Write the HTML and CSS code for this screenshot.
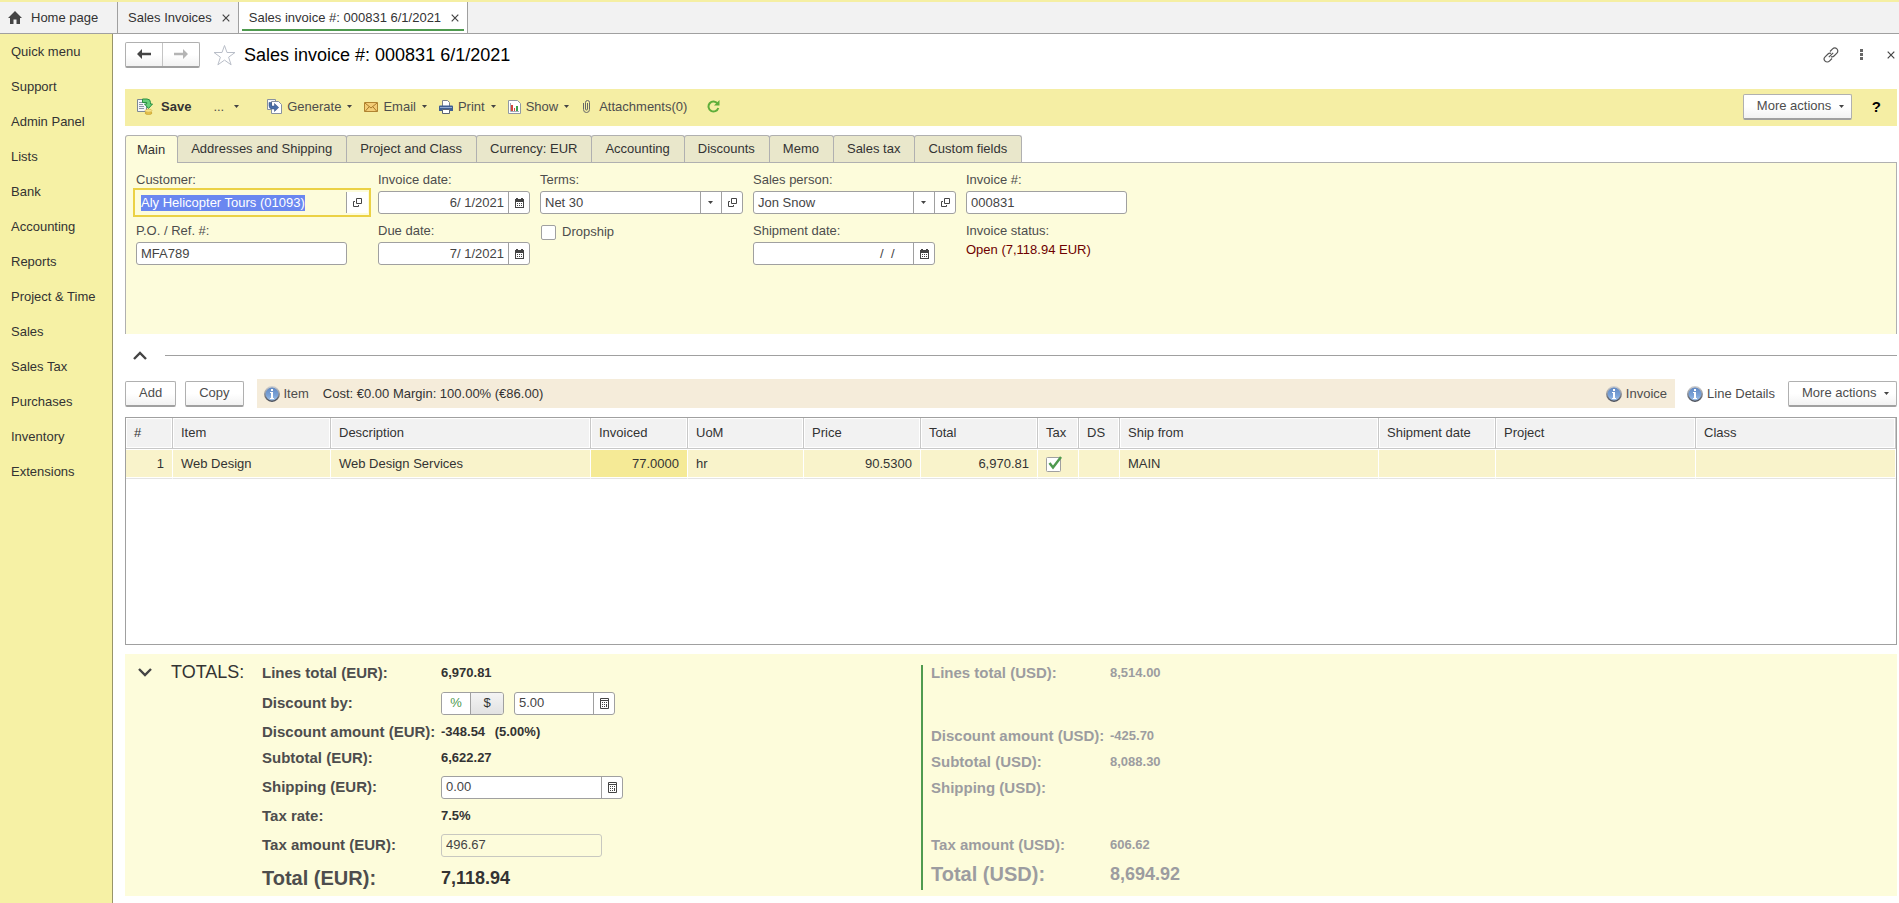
FILE: index.html
```
<!DOCTYPE html>
<html lang="en">

<head>
    <meta charset="UTF-8">
    <meta name="viewport" content="width=device-width, initial-scale=1.0">
    <title>Sales invoice #: 000831 6/1/2021</title>
    <link rel="stylesheet" href="styles.css">
</head>

<body>

    <!-- shared icons -->
    <svg class="sprite" aria-hidden="true">
        <defs>
            <linearGradient id="infoFill" x1="0" y1="0" x2="0" y2="1">
                <stop offset="0" stop-color="#5f86c0" />
                <stop offset="0.6" stop-color="#7ba3d8" />
                <stop offset="1" stop-color="#a5c6ec" />
            </linearGradient>
            <linearGradient id="infoRing" x1="0" y1="0" x2="0" y2="1">
                <stop offset="0" stop-color="#cfcfcf" />
                <stop offset="1" stop-color="#4a4f5a" />
            </linearGradient>
        </defs>
        <symbol id="icon-calendar" viewBox="0 0 9 10">
            <path d="M0 1h9v9H0z" fill="#444" />
            <path d="M1 0h2v2H1zM6 0h2v2H6z" fill="#444" />
            <path d="M1 4h7v5H1z" fill="#fff" />
            <path d="M2 5h1v1H2zM4 5h1v1H4zM6 5h1v1H6zM2 7h1v1H2zM4 7h1v1H4zM6 7h1v1H6z" fill="#444" />
        </symbol>
        <symbol id="icon-open" viewBox="0 0 9 9">
            <path d="M3.500 0.500h5v5h-5zM2 3.500H0.500v5h5V7" fill="none" stroke="#444" />
        </symbol>
        <symbol id="icon-calc" viewBox="0 0 9 11">
            <path d="M0.500 0.500h8v10h-8z" fill="#fff" stroke="#444" />
            <path d="M1 2h7v1H1z" fill="#444" />
            <path d="M2 4h1v1H2zM4 4h1v1H4zM6 4h1v1H6zM2 6h1v1H2zM4 6h1v1H4zM6 6h1v3H6zM2 8h1v1H2zM4 8h1v1H4z" fill="#444" />
        </symbol>
        <symbol id="icon-info" viewBox="0 0 16 16">
            <circle cx="8" cy="8" r="7.200" fill="url(#infoFill)" stroke="url(#infoRing)" stroke-width="1.500" />
            <path d="M7 3h2v2H7zM6 6h3v6h1v1H6v-1h1V7H6z" fill="#fff" />
        </symbol>
        <symbol id="icon-caret" viewBox="0 0 5 3">
            <path d="M0 0h5L2.500 3z" fill="#444" />
        </symbol>
        <symbol id="icon-close" viewBox="0 0 8 8">
            <path d="M0.700 0.700l6.600 6.600M7.300 0.700L0.700 7.300" stroke="#444" stroke-width="1.200" />
        </symbol>
    </svg>

    <header class="window-tabs">
        <a href="#" class="window-tab home">
            <svg width="14" height="13" viewBox="0 0 14 13"><path d="M7 0L0 7h2v6h3.500V8.500h3V13H12V7h2z" fill="#444" /></svg>
            Home page
        </a>
        <div class="window-tab">
            <a href="#">Sales Invoices</a>
            <button type="button" class="close" aria-label="Close tab"><svg width="8" height="8"><use href="#icon-close" /></svg></button>
        </div>
        <div class="window-tab current">
            <a href="#">Sales invoice #: 000831 6/1/2021</a>
            <button type="button" class="close" aria-label="Close tab"><svg width="8" height="8"><use href="#icon-close" /></svg></button>
        </div>
    </header>

    <div class="page">

        <nav class="sidebar">
            <a href="#">Quick menu</a>
            <a href="#">Support</a>
            <a href="#">Admin Panel</a>
            <a href="#">Lists</a>
            <a href="#">Bank</a>
            <a href="#">Accounting</a>
            <a href="#">Reports</a>
            <a href="#">Project &amp; Time</a>
            <a href="#">Sales</a>
            <a href="#">Sales Tax</a>
            <a href="#">Purchases</a>
            <a href="#">Inventory</a>
            <a href="#">Extensions</a>
        </nav>

        <main class="content">

            <div class="title-bar">
                <div class="history">
                    <button type="button" aria-label="Back">
                        <svg width="14" height="10" viewBox="0 0 14 10"><path d="M0 5l5-5v3.800h9v2.400H5V10z" fill="#444" /></svg>
                    </button>
                    <button type="button" aria-label="Forward">
                        <svg width="14" height="10" viewBox="0 0 14 10"><path d="M14 5L9 0v3.800H0v2.400h9V10z" fill="#b4b4b4" /></svg>
                    </button>
                </div>
                <button type="button" class="plain star" aria-label="Add to favorites">
                    <svg width="23" height="22" viewBox="0 0 23 22"><path d="M11.500 1.500l2.500 7h8l-6.400 4.700 2.500 7.600-6.600-4.700-6.600 4.700 2.500-7.600L1 8.500h8z" fill="#fff" stroke="#b9bec8" /></svg>
                </button>
                <h1>Sales invoice #: 000831 6/1/2021</h1>
                <div class="window-tools">
                    <button type="button" class="plain" aria-label="Get link">
                        <svg width="16" height="16" viewBox="0 0 16 16"><path d="M7 4.500l2.600-2.600a2.900 2.900 0 0 1 4.300 4.300L11 9a2.800 2.800 0 0 1-3 .6M9 11.500l-2.600 2.600a2.900 2.900 0 0 1-4.300-4.300L5 7a2.800 2.800 0 0 1 3-.6M5.800 10.200l4.400-4.400" fill="none" stroke="#555" stroke-width="1.200" /></svg>
                    </button>
                    <button type="button" class="plain" aria-label="Menu">
                        <svg width="3" height="11" viewBox="0 0 3 11"><path d="M0 0h3v3H0zM0 4h3v3H0zM0 8h3v3H0z" fill="#666" /></svg>
                    </button>
                    <button type="button" class="plain" aria-label="Close"><svg width="8" height="8"><use href="#icon-close" /></svg></button>
                </div>
            </div>

            <div class="toolbar">
                <button type="button" class="tool save">
                    <svg width="16" height="17" viewBox="0 0 16 17">
                        <path d="M0.500 1.500h9v12h-9z" fill="#f4f6fa" stroke="#7d8795" />
                        <path d="M2 4.500h5M2 6.500h4M2 8.500h5M2 10.500h5" stroke="#8d96a5" />
                        <path d="M5.500 1h4.500a3.500 3.500 0 0 1 3.500 3.500V6h2L11.500 10.500 7.500 6h2.200V4.500H5.500z" fill="#67d07a" stroke="#2a8f43" />
                        <ellipse cx="11.500" cy="15" rx="3.500" ry="1.500" fill="#e5c24a" stroke="#b98f22" stroke-width="0.500" />
                        <ellipse cx="11.500" cy="12.700" rx="3.500" ry="1.500" fill="#f7e38a" stroke="#c9a033" stroke-width="0.500" />
                    </svg>
                    Save
                </button>
                <button type="button" class="tool more">... <svg class="caret" width="5" height="3"><use href="#icon-caret" /></svg></button>
                <button type="button" class="tool">
                    <svg width="15" height="15" viewBox="0 0 15 15">
                        <path d="M0.500 0.500h8v10h-8z" fill="#f4f6fa" stroke="#8791a0" />
                        <path d="M4.500 2.500h7l3 3v9h-10z" fill="#fff" stroke="#8791a0" />
                        <path d="M2 3.500h2.500v3.500h3V4.500l4.200 4L7.500 12.500V10H5.500A3.500 3.500 0 0 1 2 6.700z" fill="#4a6fa8" stroke="#2f4d7d" stroke-width="0.500" />
                    </svg>
                    Generate <svg class="caret" width="5" height="3"><use href="#icon-caret" /></svg>
                </button>
                <button type="button" class="tool">
                    <svg width="14" height="10" viewBox="0 0 14 10">
                        <path d="M0.500 0.500h13v9H0.500z" fill="#f3cd76" stroke="#b08331" />
                        <path d="M1 1l6 5 6-5M1 9.500L5.200 4.700M13 9.500L8.800 4.700" fill="none" stroke="#a87a2a" />
                    </svg>
                    Email <svg class="caret" width="5" height="3"><use href="#icon-caret" /></svg>
                </button>
                <button type="button" class="tool">
                    <svg width="14" height="14" viewBox="0 0 14 14">
                        <path d="M3.500 6V0.500h5l2 2V6" fill="#fff" stroke="#7a7f8a" />
                        <path d="M1 5.500h12a1 1 0 0 1 1 1V11H0V6.500a1 1 0 0 1 1-1z" fill="#3f5f93" />
                        <path d="M1 7h12v1H1z" fill="#91aad2" />
                        <path d="M3.500 9.500h7v4h-7z" fill="#fff" stroke="#5a6273" />
                    </svg>
                    Print <svg class="caret" width="5" height="3"><use href="#icon-caret" /></svg>
                </button>
                <button type="button" class="tool">
                    <svg width="13" height="14" viewBox="0 0 13 14">
                        <path d="M0.500 0.500h9l3 3v10h-12z" fill="#fff" stroke="#8f98a5" />
                        <path d="M3 5h2v6H3z" fill="#d4473c" />
                        <path d="M6 8h1v3H6z" fill="#d4473c" />
                        <path d="M8 6h2v5H8z" fill="#3aa04a" />
                        <path d="M2.500 3v8.500H11" fill="none" stroke="#a5abb5" />
                    </svg>
                    Show <svg class="caret" width="5" height="3"><use href="#icon-caret" /></svg>
                </button>
                <button type="button" class="tool attach">
                    <svg width="7" height="13" viewBox="0 0 7 13"><path d="M4.500 3v6a1 1 0 0 1-2 0V2.500a2 2 0 0 1 4 0v7a3 3 0 0 1-6 0V3" fill="none" stroke="#666" /></svg>
                    Attachments(0)
                </button>
                <button type="button" class="tool" aria-label="Refresh">
                    <svg width="13" height="13" viewBox="0 0 13 13"><path d="M10.500 3.500A5 5 0 1 0 11.300 8" fill="none" stroke="#5fae3a" stroke-width="2" /><path d="M12.500 0v5.500H7z" fill="#5fae3a" /></svg>
                </button>
                <button type="button" class="btn menu-btn toolbar-more">More actions <svg class="caret" width="5" height="3"><use href="#icon-caret" /></svg></button>
                <button type="button" class="plain help">?</button>
            </div>

            <div class="form-tabs">
                <button type="button" class="form-tab active">Main</button>
                <button type="button" class="form-tab">Addresses and Shipping</button>
                <button type="button" class="form-tab">Project and Class</button>
                <button type="button" class="form-tab">Currency: EUR</button>
                <button type="button" class="form-tab">Accounting</button>
                <button type="button" class="form-tab">Discounts</button>
                <button type="button" class="form-tab">Memo</button>
                <button type="button" class="form-tab">Sales tax</button>
                <button type="button" class="form-tab">Custom fields</button>
            </div>

            <form class="invoice-form">
                <div class="form-group">
                    <label for="customer">Customer:</label>
                    <div class="field focused">
                        <input type="text" id="customer" value="Aly Helicopter Tours (01093)">
                        <button type="button" aria-label="Open customer"><svg width="9" height="9"><use href="#icon-open" /></svg></button>
                    </div>
                </div>
                <div class="form-group">
                    <label for="invoice-date">Invoice date:</label>
                    <div class="field date">
                        <input type="text" id="invoice-date" value="6/ 1/2021">
                        <button type="button" aria-label="Pick date"><svg width="9" height="10"><use href="#icon-calendar" /></svg></button>
                    </div>
                </div>
                <div class="form-group">
                    <label for="terms">Terms:</label>
                    <div class="field wide">
                        <select id="terms">
                            <option>Net 30</option>
                        </select>
                        <button type="button" aria-label="Open terms"><svg width="9" height="9"><use href="#icon-open" /></svg></button>
                    </div>
                </div>
                <div class="form-group">
                    <label for="sales-person">Sales person:</label>
                    <div class="field wide">
                        <select id="sales-person">
                            <option>Jon Snow</option>
                        </select>
                        <button type="button" aria-label="Open sales person"><svg width="9" height="9"><use href="#icon-open" /></svg></button>
                    </div>
                </div>
                <div class="form-group">
                    <label for="invoice-number">Invoice #:</label>
                    <div class="field number">
                        <input type="text" id="invoice-number" value="000831">
                    </div>
                </div>

                <div class="form-group">
                    <label for="po">P.O. / Ref. #:</label>
                    <div class="field po">
                        <input type="text" id="po" value="MFA789">
                    </div>
                </div>
                <div class="form-group">
                    <label for="due-date">Due date:</label>
                    <div class="field date">
                        <input type="text" id="due-date" value="7/ 1/2021">
                        <button type="button" aria-label="Pick date"><svg width="9" height="10"><use href="#icon-calendar" /></svg></button>
                    </div>
                </div>
                <div class="form-check">
                    <input type="checkbox" id="dropship">
                    <label for="dropship">Dropship</label>
                </div>
                <div class="form-group">
                    <label for="shipment-date">Shipment date:</label>
                    <div class="field date shipment">
                        <input type="text" id="shipment-date" value="  /  /    ">
                        <button type="button" aria-label="Pick date"><svg width="9" height="10"><use href="#icon-calendar" /></svg></button>
                    </div>
                </div>
                <div class="form-group">
                    <span>Invoice status:</span>
                    <a href="#" class="status">Open (7,118.94 EUR)</a>
                </div>
            </form>

            <div class="splitter">
                <button type="button" class="plain" aria-label="Collapse">
                    <svg width="14" height="9" viewBox="0 0 14 9"><path d="M1 8l6-6 6 6" fill="none" stroke="#444" stroke-width="2.400" /></svg>
                </button>
                <hr>
            </div>

            <div class="lines-bar">
                <button type="button" class="btn">Add</button>
                <button type="button" class="btn">Copy</button>
                <div class="item-info">
                    <button type="button" class="info"><svg width="16" height="16"><use href="#icon-info" /></svg>Item</button>
                    <span class="cost">Cost: €0.00 Margin: 100.00% (€86.00)</span>
                    <button type="button" class="info last"><svg width="16" height="16"><use href="#icon-info" /></svg>Invoice</button>
                </div>
                <button type="button" class="info"><svg width="16" height="16"><use href="#icon-info" /></svg>Line Details</button>
                <button type="button" class="btn menu-btn">More actions <svg class="caret" width="5" height="3"><use href="#icon-caret" /></svg></button>
            </div>

            <div class="lines">
                <table>
                    <colgroup>
                        <col class="col-num">
                        <col class="col-item">
                        <col class="col-desc">
                        <col class="col-qty">
                        <col class="col-unit">
                        <col class="col-amount">
                        <col class="col-amount">
                        <col class="col-flag">
                        <col class="col-flag">
                        <col>
                        <col class="col-amount">
                        <col class="col-link">
                        <col class="col-link">
                    </colgroup>
                    <thead>
                        <tr>
                            <th>#</th>
                            <th>Item</th>
                            <th>Description</th>
                            <th>Invoiced</th>
                            <th>UoM</th>
                            <th>Price</th>
                            <th>Total</th>
                            <th>Tax</th>
                            <th>DS</th>
                            <th>Ship from</th>
                            <th>Shipment date</th>
                            <th>Project</th>
                            <th>Class</th>
                        </tr>
                    </thead>
                    <tbody>
                        <tr>
                            <td class="num">1</td>
                            <td>Web Design</td>
                            <td>Web Design Services</td>
                            <td class="num selected">77.0000</td>
                            <td>hr</td>
                            <td class="num">90.5300</td>
                            <td class="num">6,970.81</td>
                            <td class="check"><input type="checkbox" aria-label="Tax" checked></td>
                            <td></td>
                            <td>MAIN</td>
                            <td></td>
                            <td></td>
                            <td></td>
                        </tr>
                    </tbody>
                </table>
            </div>

            <section class="totals">
                <button type="button" class="plain toggle" aria-label="Collapse totals">
                    <svg width="14" height="9" viewBox="0 0 14 9"><path d="M1 1l6 6 6-6" fill="none" stroke="#444" stroke-width="2.400" /></svg>
                </button>
                <h2>TOTALS:</h2>

                <div class="sums eur">
                    <span class="name">Lines total (EUR):</span>
                    <span class="value">6,970.81</span>

                    <label class="name" for="discount">Discount by:</label>
                    <div class="discount">
                        <div class="segmented">
                            <button type="button" class="on">%</button>
                            <button type="button">$</button>
                        </div>
                        <div class="field small">
                            <input type="text" id="discount" value="5.00">
                            <button type="button" aria-label="Calculator"><svg width="9" height="11"><use href="#icon-calc" /></svg></button>
                        </div>
                    </div>

                    <span class="name">Discount amount (EUR):</span>
                    <span class="value">-348.54 <span class="percent">(5.00%)</span></span>

                    <span class="name">Subtotal (EUR):</span>
                    <span class="value">6,622.27</span>

                    <label class="name" for="shipping">Shipping (EUR):</label>
                    <div class="field shipping">
                        <input type="text" id="shipping" value="0.00">
                        <button type="button" aria-label="Calculator"><svg width="9" height="11"><use href="#icon-calc" /></svg></button>
                    </div>

                    <span class="name">Tax rate:</span>
                    <span class="value">7.5%</span>

                    <label class="name" for="tax-amount">Tax amount (EUR):</label>
                    <div class="field number readonly">
                        <input type="text" id="tax-amount" value="496.67" readonly>
                    </div>

                    <span class="name grand">Total (EUR):</span>
                    <span class="value grand">7,118.94</span>
                </div>

                <div class="sums usd">
                    <span class="name">Lines total (USD):</span>
                    <span class="value">8,514.00</span>
                    <span class="name after-discount">Discount amount (USD):</span>
                    <span class="value after-discount">-425.70</span>
                    <span class="name">Subtotal (USD):</span>
                    <span class="value">8,088.30</span>
                    <span class="name">Shipping (USD):</span>
                    <span class="value"></span>
                    <span class="name after-rate">Tax amount (USD):</span>
                    <span class="value after-rate">606.62</span>
                    <span class="name grand">Total (USD):</span>
                    <span class="value grand">8,694.92</span>
                </div>
            </section>

        </main>
    </div>

    <script>
        // the customer field is ready for typing when the form opens
        const customer = document.getElementById('customer');
        customer.focus();
        customer.select();
    </script>
</body>

</html>
```
FILE: styles.css
```
* {
    box-sizing: border-box;
}

body {
    display: flex;
    flex-direction: column;
    min-height: 100vh;
    margin: 0;
    font-family: "Liberation Sans", Arial, sans-serif;
    font-size: 13px;
    line-height: 16px;
    color: #333;
    background-color: #fff;
}

button,
input,
select {
    font: inherit;
    color: inherit;
    margin: 0;
}

button {
    padding: 0;
    border: none;
    background: none;
    cursor: pointer;
}

a {
    color: inherit;
    text-decoration: none;
}

svg {
    display: block;
    flex: none;
}

.sprite {
    position: absolute;
    width: 0;
    height: 0;
}

.plain {
    display: flex;
}

/* window tabs */

.window-tabs {
    display: flex;
    height: 34px;
    border-top: 2px solid #f5efa3;
    border-bottom: 1px solid #a0a0a0;
    background-color: #f2f2f2;
}

.window-tab {
    display: flex;
    align-items: center;
    gap: 10px;
    padding: 0 8px 0 10px;
    border-right: 1px solid #a0a0a0;
}

.window-tab.home {
    gap: 9px;
    width: 118px;
    padding-left: 8px;
}

.window-tab.current {
    background: linear-gradient(#4f9a4f, #4f9a4f) center 27px / calc(100% - 6px) 2px no-repeat #fff;
}

.close {
    display: flex;
}

/* sidebar */

.page {
    display: flex;
    flex: 1;
}

.sidebar {
    display: flex;
    flex-direction: column;
    flex: none;
    width: 113px;
    border-right: 1px solid #98946a;
    background-color: #f6f1a5;
}

.sidebar a {
    padding-left: 11px;
    line-height: 35px;
}

.content {
    flex: 1;
    min-width: 0;
    padding: 8px 2px 7px 12px;
}

/* title */

.title-bar {
    display: flex;
    align-items: center;
    height: 25px;
}

.history {
    display: flex;
    width: 75px;
    height: 26px;
    border: 1px solid #b0b0b0;
    border-bottom: 2px solid #a0a0a0;
    border-radius: 2px;
    background: linear-gradient(#fff 50%, #f2f2f2);
}

.history button {
    display: flex;
    flex: 1;
    align-items: center;
    justify-content: center;
}

.history button + button {
    border-left: 1px solid #c4c4c4;
}

.star {
    margin: 0 8px 0 13px;
}

h1 {
    margin: 0;
    font-size: 18px;
    font-weight: normal;
    line-height: 24px;
    color: #000;
}

.window-tools {
    display: flex;
    align-items: center;
    gap: 18px;
    margin-left: auto;
}

.window-tools button {
    justify-content: center;
    width: 12px;
}

/* toolbar */

.toolbar {
    display: flex;
    align-items: center;
    height: 37px;
    margin-top: 22px;
    padding: 0 16px 2px 12px;
    background-color: #f5eea4;
    color: #4d4d4d;
}

.tool {
    display: flex;
    align-items: center;
    gap: 5px;
    margin-right: 12px;
}

.tool .caret {
    margin-left: 1px;
}

.tool.save {
    gap: 8px;
    margin-right: 22px;
    font-weight: bold;
    color: #333;
}

.tool.more {
    gap: 9px;
    margin-right: 28px;
}

.tool.attach {
    gap: 9px;
    margin: 0 20px 0 2px;
}

.btn {
    height: 26px;
    padding: 0 13px;
    border: 1px solid #b0b0b0;
    border-bottom: 2px solid #a0a0a0;
    border-radius: 2px;
    background: linear-gradient(#fff 50%, #f2f2f2);
    color: #4d4d4d;
}

.menu-btn {
    display: flex;
    align-items: center;
    justify-content: space-between;
    width: 109px;
    padding: 0 7px 0 13px;
}

.toolbar-more {
    margin-left: auto;
}

.help {
    margin-left: 20px;
    font-size: 15px;
    font-weight: bold;
    color: #000;
}

/* form tabs */

.form-tabs {
    display: flex;
    margin-top: 9px;
}

.form-tab {
    height: 27px;
    padding: 0 14px 0 13px;
    border: 1px solid #b0b0b0;
    border-bottom: none;
    border-radius: 3px 3px 0 0;
    background-color: #e9e7cb;
}

.form-tab + .form-tab {
    margin-left: -1px;
}

.form-tab.active {
    position: relative;
    height: 28px;
    margin-bottom: -1px;
    padding: 0 12px 0 11px;
    background-color: #fdfcdb;
}

/* main panel */

.invoice-form {
    display: grid;
    grid-template-columns: 242px 162px 213px 213px 161px;
    grid-template-rows: 42px 42px;
    row-gap: 9px;
    height: 172px;
    padding: 9px 10px;
    border: 1px solid #b0b0b0;
    border-bottom: none;
    background-color: #fdfcdb;
    color: #4d4d4d;
}

.form-group {
    display: flex;
    flex-direction: column;
    align-items: flex-start;
    gap: 3px;
}

.field {
    display: flex;
    width: 161px;
    height: 23px;
    border: 1px solid #a0a0a0;
    border-radius: 3px;
    background-color: #fff;
    color: #444;
}

.field input,
.field select {
    flex: 1;
    min-width: 0;
    padding: 0 4px;
    border: none;
    outline: none;
    background: none;
}

.field select {
    appearance: none;
    background: url("data:image/svg+xml,%3Csvg xmlns='http://www.w3.org/2000/svg' width='21' height='21'%3E%3Cpath d='M0 0h1v21H0z' fill='%23a0a0a0'/%3E%3Cpath d='M8 9h5l-2.500 3z' fill='%23444'/%3E%3C/svg%3E") right center no-repeat;
}

.field button {
    display: flex;
    align-items: center;
    justify-content: center;
    width: 21px;
    border-left: 1px solid #a0a0a0;
}

.field.focused {
    width: 238px;
    height: 29px;
    margin: -3px 0 -3px -3px;
    padding: 2px 1px;
    border: 2px solid #ebd145;
    border-radius: 0;
    background-color: #fdfcdb;
}

.field.focused input {
    padding-left: 5px;
}

.field.focused button {
    width: 22px;
    background-color: #fff;
}

.field.focused input::selection {
    background-color: rgba(104, 134, 240, 0.99);
    color: #fff;
}

.field.date {
    width: 152px;
}

.field.date input {
    text-align: right;
}

.field.date.shipment {
    width: 182px;
}

.field.wide {
    width: 203px;
}

.field.po {
    width: 211px;
}

.form-check {
    display: flex;
    align-items: center;
    gap: 6px;
    height: 18px;
    padding-left: 1px;
}

.form-check input {
    appearance: none;
    width: 15px;
    height: 15px;
    border: 1px solid #a0a0a0;
    border-radius: 2px;
    background-color: #fff;
}

.status {
    color: #6e0000;
}

/* splitter */

.splitter {
    display: flex;
    align-items: center;
    gap: 18px;
    height: 43px;
    margin-bottom: 2px;
    padding-left: 8px;
}

hr {
    flex: 1;
    margin: 0;
    border: none;
    border-top: 1px solid #a0a0a0;
}

/* lines command bar */

.lines-bar {
    display: flex;
    align-items: center;
    gap: 9px;
    height: 29px;
}

.item-info {
    display: flex;
    flex: 1;
    align-items: center;
    height: 29px;
    margin: 0 3px 0 4px;
    padding: 0 8px 0 7px;
    background-color: #f5ecda;
}

.info {
    display: flex;
    align-items: center;
    gap: 4px;
    color: #4d4d4d;
}

.cost {
    margin-left: 14px;
}

.info.last {
    margin-left: auto;
}

.lines-bar > .menu-btn {
    margin-left: 4px;
}

/* lines table */

.lines {
    height: 228px;
    margin-top: 9px;
    border: 1px solid #a0a0a0;
}

table {
    width: 100%;
    border-collapse: separate;
    border-spacing: 0;
    table-layout: fixed;
}

th {
    height: 31px;
    padding: 0 8px;
    border-right: 1px solid #c8c8c8;
    border-bottom: 1px solid #c8c8c8;
    box-shadow: inset 0 0 0 1px #fff;
    background-color: #f2f2f2;
    font-weight: normal;
    text-align: left;
    white-space: nowrap;
}

td {
    height: 30px;
    padding: 0 8px;
    border-right: 1px solid #fff;
    border-bottom: 1px solid #e4e4e4;
    box-shadow: inset 0 1px #fff, inset 0 -1px #fff;
    background-color: #f9f3cb;
    white-space: nowrap;
}

.num {
    text-align: right;
}

.selected {
    background-color: #f5ea96;
}

.col-num {
    width: 47px;
}

.col-item {
    width: 158px;
}

.col-desc {
    width: 260px;
}

.col-qty {
    width: 97px;
}

.col-unit {
    width: 116px;
}

.col-amount {
    width: 117px;
}

.col-flag {
    width: 41px;
}

.col-link {
    width: 200px;
}

.check input {
    display: block;
    appearance: none;
    width: 16px;
    height: 16px;
    background: url("data:image/svg+xml,%3Csvg xmlns='http://www.w3.org/2000/svg' width='16' height='16'%3E%3Crect x='.500' y='1.500' width='14' height='14' rx='1' fill='%23fff' stroke='%23a0a0a0'/%3E%3Cpath d='M3.500 7l3.500 4.500L15 1' fill='none' stroke='%234f9a4f' stroke-width='2.500'/%3E%3C/svg%3E") no-repeat;
}

/* totals */

.totals {
    display: flex;
    align-items: flex-start;
    margin-top: 9px;
    padding: 3px 0;
    background-color: #fdfcdb;
}

.toggle {
    margin: 11px 19px 0 13px;
}

h2 {
    width: 91px;
    margin: 3px 0 0;
    font-size: 18px;
    font-weight: normal;
    line-height: 24px;
}

.sums {
    display: grid;
    grid-template-columns: 179px 1fr;
    align-items: center;
    font-weight: bold;
}

.eur {
    grid-template-rows: 32px 28px 30px 22px 36px 22px 36px 30px;
    width: 659px;
}

.name {
    font-size: 15px;
    color: #4d4d4d;
}

.percent {
    margin-left: 6px;
}

.grand {
    font-size: 18px;
}

.name.grand {
    font-size: 20px;
}

.sums .field,
.segmented {
    font-weight: normal;
}

.discount {
    display: flex;
    gap: 10px;
}

.field.small {
    width: 101px;
}

.field.shipping {
    width: 182px;
}

.field.readonly {
    border-color: #c8c8c0;
    background: none;
}

.segmented {
    display: flex;
    width: 63px;
    height: 23px;
    border: 1px solid #a0a0a0;
    border-radius: 3px;
    overflow: hidden;
}

.segmented button {
    flex: 1;
    background: linear-gradient(#f4f4f4, #e2e2e2);
}

.segmented .on {
    flex: none;
    width: 29px;
    border-right: 1px solid #a0a0a0;
    background: #fff;
    color: #4f9a4f;
}

.usd {
    grid-template-rows: 16px;
    flex: 1;
    margin-top: 8px;
    padding-left: 8px;
    border-left: 2px solid #4f9a4f;
    line-height: 26px;
}

.usd,
.usd .name {
    color: #9c9ca0;
}

/* no dollar amounts beside the discount and tax rate rows */
.after-discount {
    margin-top: 42px;
}

.after-rate {
    margin-top: 31px;
}

.usd .grand {
    line-height: 32px;
}
```
